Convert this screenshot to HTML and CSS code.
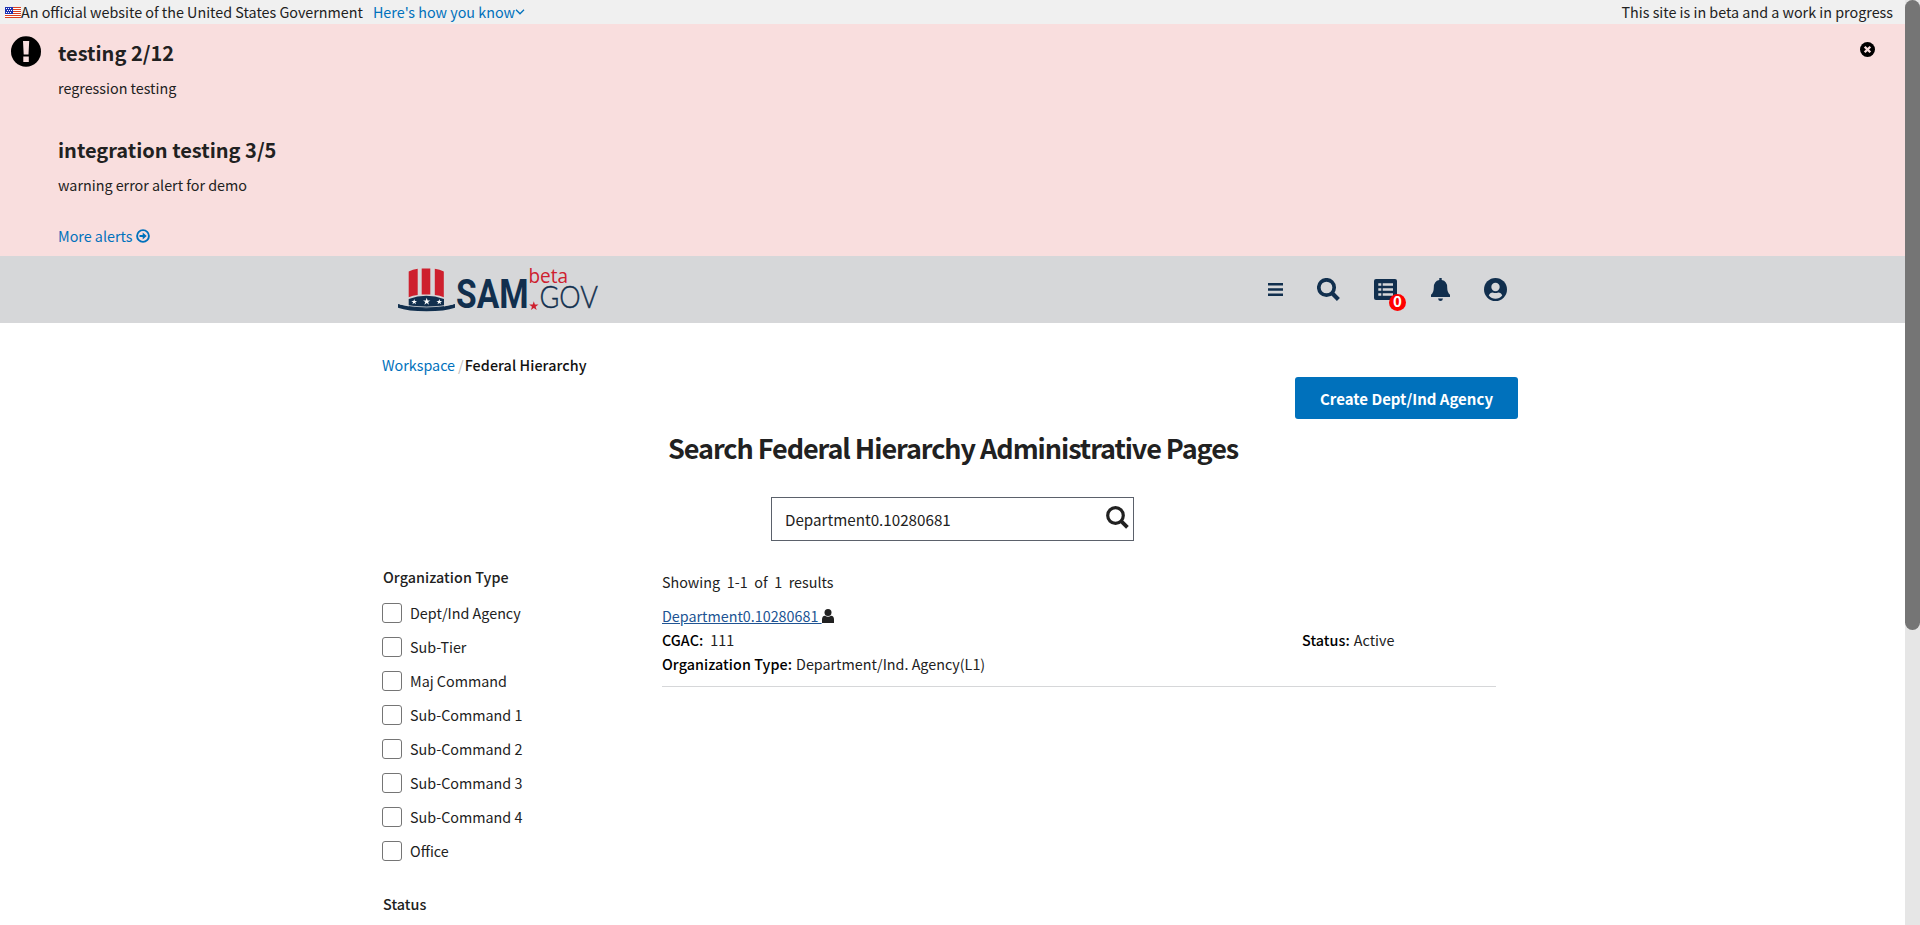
FILE: index.html
```html
<!DOCTYPE html>
<html lang="en">
<head>
<meta charset="utf-8">
<title>Federal Hierarchy</title>
<link rel="stylesheet" href="styles.css">
</head>
<body>
<div class="page">
  <div class="banner">
    <svg class="flag" viewBox="0 0 16 11"><rect width="16" height="11" fill="#fff"/><path d="M0 .5h16M0 2.5h16M0 4.5h16M0 6.5h16M0 8.5h16M0 10.5h16" stroke="#db3e1f"/><rect width="8" height="7" fill="#1e33b1"/><path d="M1 1.5h6M2 3.5h6M1 5.5h6" stroke="#fff" stroke-dasharray="1 1"/></svg>
    <span class="official">An official website of the United States Government</span>
    <a class="know">Here's how you know</a>
    <svg class="chev" viewBox="0 0 10 6"><path d="M1 .8l4 4 4-4" fill="none" stroke="#0071bc" stroke-width="1.3"/></svg>
    <span class="beta-note">This site is in beta and a work in progress</span>
  </div>
  <section class="alert">
    <svg class="alert-icon" viewBox="0 0 30 31"><ellipse cx="15" cy="15.5" rx="15" ry="15.3"/><path d="M12 5h6.2l-.7 13.500h-4.800zM12.300 20.500h5.500v5.500h-5.500z" fill="#f9dede"/></svg>
    <div class="alert-body">
      <h3>testing 2/12</h3>
      <p>regression testing</p>
      <h3 class="second">integration testing 3/5</h3>
      <p>warning error alert for demo</p>
      <a class="more"><span>More alerts</span><svg viewBox="0 0 14 14"><circle cx="7" cy="7" r="5.9" fill="none" stroke="#0071bc" stroke-width="1.9"/><path d="M3.500 6h3.200V3.600L10.700 7l-4 3.400V8H3.500z" fill="#0071bc"/></svg></a>
    </div>
    <svg class="close" viewBox="0 0 15 15"><circle cx="7.500" cy="7.500" r="7.500"/><path d="M4.700 4.700l5.600 5.600M10.300 4.700l-5.600 5.600" stroke="#f9dede" stroke-width="2.300"/></svg>
  </section>
  <header class="header">
    <svg class="logo" viewBox="0 0 202 46">
      <path d="M10.700 4.500q4-2.300 9-2.800V28q-5 .5-9 2.200zM23.700 1.500h8.600v26h-8.600zM36.800 1.700q5 .5 9 2.800v25.700q-4-1.700-9-2.200z" fill="#ce202e"/>
      <path d="M10.700 32q17.500-6.500 35.300 0v8q-17.500 3-35.300 0z" fill="#112f4e"/>
      <path d="M0 37l11 2.500q17 3.500 35 0L57 37v3.700q-10 3.500-28.500 3.500T0 40.700z" fill="#112f4e"/>
      <path d="M2 37.200q26.500 5.600 53 0" fill="none" stroke="#d6d7d9" stroke-width=".8"/>
      <path d="M28.700 30.800l.9 2.700h2.800l-2.300 1.600.9 2.700-2.300-1.700-2.300 1.700.9-2.700-2.300-1.600h2.800z" fill="#fff"/>
      <path d="M16.200 32l.7 2h2.200l-1.800 1.300.7 2-1.800-1.300-1.800 1.300.7-2-1.800-1.300h2.200zM41.300 32l.7 2h2.200l-1.800 1.300.7 2-1.800-1.300-1.800 1.300.7-2-1.800-1.300h2.200z" fill="#fff"/>
      <text class="sam" x="58" y="40.500" textLength="72.500" lengthAdjust="spacingAndGlyphs">SAM</text>
      <text class="gov" x="141.500" y="41" textLength="58.500" lengthAdjust="spacingAndGlyphs">GOV</text>
      <text class="beta" x="130.500" y="16.400" textLength="39.500" lengthAdjust="spacingAndGlyphs">beta</text>
      <path d="M135.800 34.200l1.100 3.400h3.600l-2.900 2.100 1.100 3.400-2.900-2.100-2.900 2.100 1.100-3.400-2.900-2.100h3.600z" fill="#ce202e"/>
    </svg>
    <nav class="tools">
      <svg class="menu" viewBox="0 0 15 13"><path d="M0 1.200h15M0 6.500h15M0 11.800h15" stroke="#112f4e" stroke-width="2.400"/></svg>
      <svg class="search" viewBox="0 0 23 23"><circle cx="9.500" cy="9.500" r="7.700" fill="none" stroke="#112f4e" stroke-width="3.700"/><path d="M15.200 15.200l6.200 6.200" stroke="#112f4e" stroke-width="4.200"/></svg>
      <span class="requests"><svg viewBox="0 0 23 21"><rect width="23" height="21" rx="2" fill="#112f4e"/><path d="M4.300 5.500h3M4.300 10.500h3M4.300 15.500h3M8.700 5.500h10.300M8.700 10.500h10.300M8.700 15.500h10.300" stroke="#d6d7d9" stroke-width="2.500"/></svg><b class="badge">0</b></span>
      <svg class="bell" viewBox="0 0 19 23"><path d="M8.300 0h2.400v2q5.500 1 5.500 7.500 0 5 2.800 7.300v2.200H0v-2.200q2.800-2.300 2.800-7.300Q2.800 3 8.300 2zM7 20.500h5Q11.500 23 9.500 23T7 20.500z" fill="#112f4e"/></svg>
      <svg class="user" viewBox="0 0 23 23"><circle cx="11.500" cy="11.500" r="11.500" fill="#112f4e"/><circle cx="11.500" cy="9" r="4.200" fill="#d6d7d9"/><path d="M4.800 17.500q1-3 4-3 2.700 1 5.400 0 3 0 4 3-2.800 3.300-6.700 3.300t-6.700-3.300z" fill="#d6d7d9"/></svg>
    </nav>
  </header>
  <main class="main">
    <div class="crumbs"><a>Workspace</a><i>/</i><span>Federal Hierarchy</span></div>
    <button class="create">Create Dept/Ind Agency</button>
    <h1>Search Federal Hierarchy Administrative Pages</h1>
    <div class="searchbox">
      <span>Department0.10280681</span>
      <svg viewBox="0 0 23 23"><circle cx="9.500" cy="9.500" r="7.800" fill="none" stroke="#212121" stroke-width="3.200"/><path d="M15.200 15.200l6.200 6.200" stroke="#212121" stroke-width="3.800"/></svg>
    </div>
    <div class="columns">
      <aside class="filters">
        <h4>Organization Type</h4>
        <div class="options">
          <label><i class="box"></i>Dept/Ind Agency</label>
          <label><i class="box"></i>Sub-Tier</label>
          <label><i class="box"></i>Maj Command</label>
          <label><i class="box"></i>Sub-Command 1</label>
          <label><i class="box"></i>Sub-Command 2</label>
          <label><i class="box"></i>Sub-Command 3</label>
          <label><i class="box"></i>Sub-Command 4</label>
          <label><i class="box"></i>Office</label>
        </div>
        <h4>Status</h4>
      </aside>
      <section class="results">
        <div class="showing">Showing 1-1 of 1 results</div>
        <div class="name"><a>Department0.10280681&nbsp;</a><svg viewBox="0 0 12 14"><circle cx="6" cy="3.500" r="3.500" fill="#212121"/><path d="M0 14v-3.500Q0 7 3 6.800q3 1.800 6 0 3 .2 3 3.700V14z" fill="#212121"/></svg></div>
        <div class="meta"><div class="code"><b>CGAC:</b><span>111</span></div><div class="state"><b>Status:</b><span>Active</span></div></div>
        <div class="org"><b>Organization Type:</b><span>Department/Ind. Agency(L1)</span></div>
      </section>
    </div>
  </main>
</div>
<div class="scrollbar"><div class="thumb"></div></div>
</body>
</html>
```
FILE: styles.css
```css
* { box-sizing: border-box; }
body {
  margin: 0;
  height: 925px;
  overflow: hidden;
  display: flex;
  background: #fff;
  color: #212121;
  font: 14.33px/24px "Noto Sans CJK SC", "Noto Sans", sans-serif;
}
h1, h3, h4, p { margin: 0; }
a { color: #0071bc; }
svg { display: block; flex: none; }
i { font-style: normal; }
span, a, b, h1, h3, h4, label { white-space: nowrap; }
.page { flex: 1; min-width: 0; }
.banner { display: flex; align-items: center; height: 24px; padding: 0 12px 0 5px; background: #f0f0f0; }
.flag { width: 16px; height: 11px; }
.know { margin-left: 10px; }
.chev { width: 10px; height: 6px; }
.beta-note { margin-left: auto; }
.alert { display: flex; align-items: flex-start; height: 232px; padding: 12px 30px 0 11px; background: #f9dede; }
.alert-icon { width: 30px; height: 31px; margin-right: 17px; }
.alert-body { flex: 1; }
.alert h3 { font-size: 20px; line-height: 33px; margin-bottom: 7px; }
.alert .second { margin-top: 33px; }
.more { display: flex; align-items: center; gap: 4px; margin-top: 27px; }
.more svg { width: 14px; height: 14px; }
.close { width: 15px; height: 15px; margin-top: 6px; }
.header { display: flex; align-items: flex-start; justify-content: space-between; height: 67px; padding: 11px 398px 0; background: #d6d7d9; }
.logo { width: 202px; height: 46px; overflow: visible; }
.sam { font: bold 40px Roboto, sans-serif; fill: #112f4e; }
.gov { font: 300 31.500px Lato, sans-serif; fill: #112f4e; stroke: #112f4e; stroke-width: .4px; }
.beta { font: 20px "Open Sans", sans-serif; fill: #ce202e; }
.tools { display: flex; align-items: center; height: 45px; }
.menu { width: 15px; height: 13px; margin-right: 34px; }
.search { width: 23px; height: 23px; margin-right: 34px; }
.requests { position: relative; margin-right: 34px; }
.requests svg { width: 23px; height: 21px; }
.badge { position: absolute; left: 15px; top: 15px; width: 17px; height: 17px; border-radius: 50%; background: #f00; color: #fff; font-size: 15px; line-height: 13px; text-align: center; }
.bell { width: 19px; height: 23px; margin-right: 34px; }
.user { width: 23px; height: 23px; }
.main { display: flex; flex-direction: column; width: 1136px; margin-left: 382px; padding-top: 30px; }
.crumbs { display: flex; }
.crumbs i { margin: 0 1px 0 3px; color: #bbb; }
.crumbs span { font-weight: 500; color: #111; letter-spacing: .07px; }
.create { align-self: flex-end; width: 223px; height: 42px; padding: 0; border: 0; border-radius: 3px; background: #0071bc; color: #fff; font: bold 15px/41px "Noto Sans CJK SC", sans-serif; }
h1 { margin: 9px 0 0 286px; font-size: 27px; line-height: 40px; letter-spacing: -1.06px; }
.searchbox { display: flex; justify-content: space-between; width: 363px; height: 44px; margin: 29px 0 0 389px; padding: 8px 4px 0 13px; border: 1px solid #5b616b; }
.searchbox span { font-size: 15.200px; line-height: 26px; }
.searchbox svg { width: 23px; height: 23px; }
.columns { display: flex; margin-top: 24px; }
.filters { width: 280px; }
h4 { padding-left: 1px; font-size: 14.330px; font-weight: 500; letter-spacing: .07px; }
.options { display: grid; gap: 14px; margin: 14px 0 31px; }
.options label { display: flex; gap: 8px; height: 20px; line-height: 20px; }
.box { width: 20px; height: 20px; border: 1px solid #757575; border-radius: 3px; }
.results { width: 834px; height: 122px; padding-top: 5px; border-bottom: 1px solid #d6d7d9; }
.results b { color: #000; font-weight: 500; letter-spacing: .07px; }
.showing { word-spacing: 3.400px; }
.name { display: flex; align-items: center; margin-top: 10px; }
.name a { color: #205493; text-decoration: underline; }
.name svg { width: 12px; height: 14px; }
.meta { display: flex; }
.meta b, .org b { margin-right: 4px; }
.code { width: 640px; }
.code span { margin-left: 3px; }
.scrollbar { width: 15px; background: #e6e6e6; }
.thumb { height: 630px; border-radius: 7.500px; background: #757575; }
```
